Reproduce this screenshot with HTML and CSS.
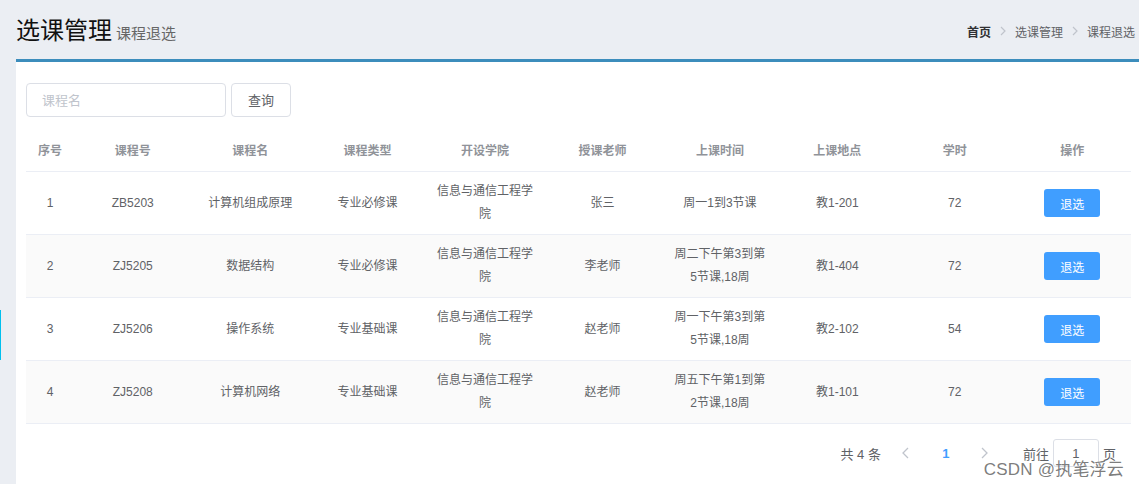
FILE: index.html
```html
<!DOCTYPE html>
<html lang="zh-CN">
<head>
    <meta charset="UTF-8">
    <meta name="viewport" content="width=device-width, initial-scale=1.0">
    <title>课程退选</title>
    <link rel="stylesheet" href="styles.css">
</head>
<body>
    <div class="side-marker"></div>

    <header class="content-header">
        <h1>选课管理<small>课程退选</small></h1>
        <ol class="breadcrumb">
            <li class="home">首页</li>
            <li class="sep"><svg width="6" height="10" viewBox="0 0 6 10"><path d="M1 1l4 4-4 4" fill="none" stroke="#c0c4cc" stroke-width="1.2"/></svg></li>
            <li>选课管理</li>
            <li class="sep"><svg width="6" height="10" viewBox="0 0 6 10"><path d="M1 1l4 4-4 4" fill="none" stroke="#c0c4cc" stroke-width="1.2"/></svg></li>
            <li>课程退选</li>
        </ol>
    </header>

    <section class="box">
        <div class="search-bar">
            <input type="text" class="search-input" placeholder="课程名">
            <button class="btn-plain">查询</button>
        </div>

        <table class="course-table">
            <colgroup>
                <col class="col-index">
                <col span="9">
            </colgroup>
            <thead>
                <tr>
                    <th>序号</th>
                    <th>课程号</th>
                    <th>课程名</th>
                    <th>课程类型</th>
                    <th>开设学院</th>
                    <th>授课老师</th>
                    <th>上课时间</th>
                    <th>上课地点</th>
                    <th>学时</th>
                    <th>操作</th>
                </tr>
            </thead>
            <tbody>
                <tr>
                    <td>1</td>
                    <td>ZB5203</td>
                    <td>计算机组成原理</td>
                    <td>专业必修课</td>
                    <td>信息与通信工程学<br>院</td>
                    <td>张三</td>
                    <td>周一1到3节课</td>
                    <td>教1-201</td>
                    <td>72</td>
                    <td><button class="btn-primary">退选</button></td>
                </tr>
                <tr>
                    <td>2</td>
                    <td>ZJ5205</td>
                    <td>数据结构</td>
                    <td>专业必修课</td>
                    <td>信息与通信工程学<br>院</td>
                    <td>李老师</td>
                    <td>周二下午第3到第<br>5节课,18周</td>
                    <td>教1-404</td>
                    <td>72</td>
                    <td><button class="btn-primary">退选</button></td>
                </tr>
                <tr>
                    <td>3</td>
                    <td>ZJ5206</td>
                    <td>操作系统</td>
                    <td>专业基础课</td>
                    <td>信息与通信工程学<br>院</td>
                    <td>赵老师</td>
                    <td>周一下午第3到第<br>5节课,18周</td>
                    <td>教2-102</td>
                    <td>54</td>
                    <td><button class="btn-primary">退选</button></td>
                </tr>
                <tr>
                    <td>4</td>
                    <td>ZJ5208</td>
                    <td>计算机网络</td>
                    <td>专业基础课</td>
                    <td>信息与通信工程学<br>院</td>
                    <td>赵老师</td>
                    <td>周五下午第1到第<br>2节课,18周</td>
                    <td>教1-101</td>
                    <td>72</td>
                    <td><button class="btn-primary">退选</button></td>
                </tr>
            </tbody>
        </table>

        <div class="pagination">
            <span class="total">共 4 条</span>
            <span class="page-btn disabled"><svg width="7" height="12" viewBox="0 0 7 12"><path d="M6 1L1 6l5 5" fill="none" stroke="#c0c4cc" stroke-width="1.3"/></svg></span>
            <span class="page-btn active">1</span>
            <span class="page-btn disabled"><svg width="7" height="12" viewBox="0 0 7 12"><path d="M1 1l5 5-5 5" fill="none" stroke="#c0c4cc" stroke-width="1.3"/></svg></span>
            <span class="jump">前往<input type="text" class="jump-input" value="1">页</span>
        </div>
    </section>

    <div class="watermark">CSDN @执笔浮云</div>
</body>
</html>
```

FILE: styles.css
```css
:root {
    --primary-color: #409eff;
    --box-border: #3c8dbc;
    --page-bg: #ebeef3;
    --text-color: #606266;
    --head-text: #909399;
    --line-color: #ebeef5;
}

body {
    font-family: 'Liberation Sans', 'Noto Sans CJK SC', sans-serif;
    margin: 0;
    background-color: var(--page-bg);
    color: var(--text-color);
    overflow: hidden;
    position: relative;
    min-height: 484px;
}

.side-marker {
    position: absolute;
    left: 0;
    top: 310px;
    width: 1px;
    height: 50px;
    background-color: #00c0ef;
}

.content-header {
    height: 59px;
    box-sizing: border-box;
    padding: 15px 4px 0 16px;
    display: flex;
    justify-content: space-between;
    align-items: flex-start;
}

.content-header h1 {
    margin: 0;
    font-size: 24px;
    font-weight: normal;
    line-height: 32px;
    color: #111;
}

.content-header h1 small {
    font-size: 15px;
    color: #666;
    margin-left: 4px;
}

.breadcrumb {
    list-style: none;
    margin: 0;
    padding: 0;
    display: flex;
    align-items: center;
    height: 32px;
    font-size: 12px;
    color: #606266;
}

.breadcrumb .home {
    font-weight: bold;
    color: #303133;
}

.breadcrumb .sep {
    display: flex;
    margin: 0 9px;
}

.box {
    margin-left: 16px;
    background: white;
    border-top: 3px solid var(--box-border);
    padding: 21px 8px 40px 10px;
}

.search-bar {
    display: flex;
    gap: 5px;
    align-items: center;
}

.search-input {
    width: 200px;
    height: 34px;
    box-sizing: border-box;
    border: 1px solid #dcdfe6;
    border-radius: 4px;
    padding: 0 15px;
    font-family: inherit;
    font-size: 13px;
    color: var(--text-color);
}

.search-input::placeholder {
    color: #c0c4cc;
}

.btn-plain {
    width: 60px;
    height: 34px;
    margin-top: -1px;
    background: white;
    border: 1px solid #dcdfe6;
    border-radius: 4px;
    font-family: inherit;
    font-size: 13px;
    color: #606266;
}

.course-table {
    width: 100%;
    margin-top: 15px;
    border-collapse: collapse;
    table-layout: fixed;
    font-size: 12px;
    line-height: 23px;
}

.col-index {
    width: 48px;
}

.course-table th,
.course-table td {
    padding: 8px 10px;
    text-align: center;
    vertical-align: middle;
    border-bottom: 1px solid var(--line-color);
}

.course-table th {
    color: var(--head-text);
    font-weight: bold;
}

.course-table td {
    height: 46px;
}

.course-table tbody tr:nth-child(even) td {
    background-color: #fafafa;
}

.btn-primary {
    width: 56px;
    height: 28px;
    border: none;
    border-radius: 3px;
    background-color: var(--primary-color);
    color: white;
    font-family: inherit;
    font-size: 12px;
    vertical-align: middle;
}

.pagination {
    display: flex;
    justify-content: flex-end;
    align-items: center;
    margin-top: 15px;
    padding-right: 15px;
    font-size: 13px;
    color: var(--text-color);
    height: 28px;
}

.total {
    margin-right: 10px;
}

.page-btn {
    width: 30px;
    height: 28px;
    display: flex;
    align-items: center;
    justify-content: center;
    margin-right: 9px;
}

.page-btn.active {
    color: var(--primary-color);
    font-weight: bold;
    margin-left: 1px;
}

.jump {
    display: flex;
    align-items: center;
    margin-left: 14px;
}

.jump-input {
    width: 46px;
    height: 28px;
    box-sizing: border-box;
    margin: 0 4px;
    border: 1px solid #dcdfe6;
    border-radius: 3px;
    text-align: center;
    font-family: inherit;
    font-size: 13px;
    color: var(--text-color);
}

.watermark {
    position: absolute;
    right: 15px;
    top: 455px;
    font-size: 17px;
    color: rgba(90, 90, 90, 0.8);
    letter-spacing: 0.2px;
}
```
